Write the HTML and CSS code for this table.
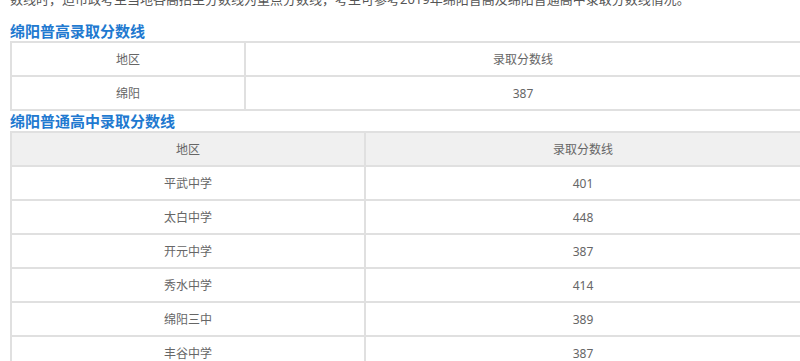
FILE: index.html
```html
<!DOCTYPE html>
<html lang="zh-CN">
<head>
<meta charset="utf-8">
<title>绵阳中考录取分数线</title>
<link rel="stylesheet" href="styles.css">
</head>
<body>
<div class="page">
  <p class="intro">数线时，适市政考生当地各高招生分数线为重点分数线，考生可参考2019年绵阳普高及绵阳普通高中录取分数线情况。</p>
  <h3 class="title">绵阳普高录取分数线</h3>
  <table class="score score-a">
    <tr><td class="c1">地区</td><td>录取分数线</td></tr>
    <tr><td class="c1">绵阳</td><td>387</td></tr>
  </table>
  <h3 class="title">绵阳普通高中录取分数线</h3>
  <table class="score score-b">
    <tr class="head"><td class="c1">地区</td><td>录取分数线</td></tr>
    <tr><td class="c1">平武中学</td><td>401</td></tr>
    <tr><td class="c1">太白中学</td><td>448</td></tr>
    <tr><td class="c1">开元中学</td><td>387</td></tr>
    <tr><td class="c1">秀水中学</td><td>414</td></tr>
    <tr><td class="c1">绵阳三中</td><td>389</td></tr>
    <tr><td class="c1">丰谷中学</td><td>387</td></tr>
  </table>
</div>
</body>
</html>
```
FILE: styles.css
```css
html {
  overflow: hidden;
  background: #fff;
}
body {
  margin: 0;
  font-family: "Noto Sans", "Noto Sans CJK SC", sans-serif;
  color: #333;
}
.page {
  padding-left: 10px;
}
.intro {
  margin: -13px 0 10px;
  font-size: 13px;
  line-height: 24px;
  color: #555;
  white-space: nowrap;
}
.title {
  margin: 0;
  font-size: 15px;
  line-height: 20px;
  font-weight: bold;
  color: #2179d0;
}
.score {
  border-collapse: collapse;
  width: 792px;
  table-layout: fixed;
}
.score td {
  border: 2px solid #e0e0e0;
  height: 34px;
  padding: 0;
  text-align: center;
  font-size: 12px;
  color: #666;
  box-sizing: border-box;
}
.score-a .c1 {
  width: 234px;
}
.score-b .c1 {
  width: 354px;
}
.score .head td {
  background: #f0f0f0;
}
```
